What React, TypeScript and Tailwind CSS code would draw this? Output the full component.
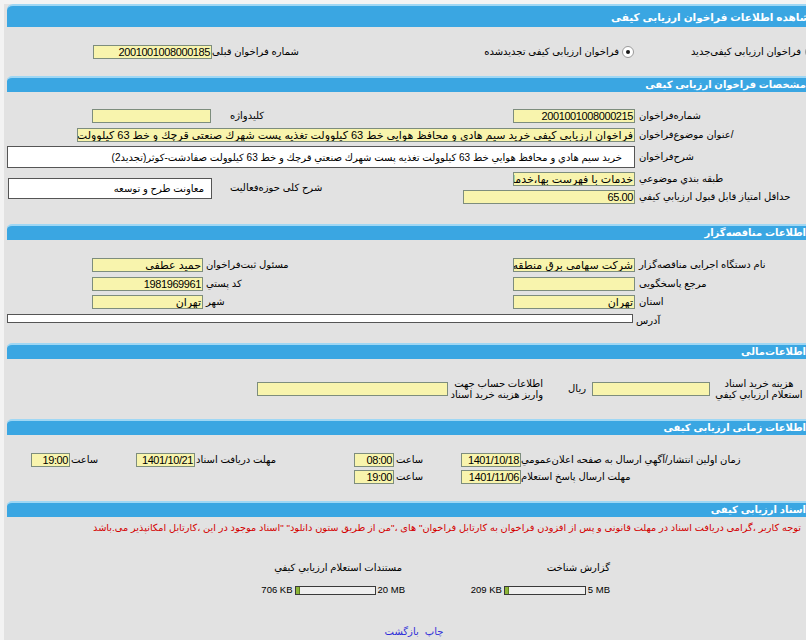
import React from "react";

const FA = "font-['Liberation_Sans','DejaVu_Sans',sans-serif]";

function Header({ children, first }: { children: React.ReactNode; first?: boolean }) {
  return first ? (
    <div className="mx-[3px] mt-[4px] h-[23px] rounded-tl-[6px] rounded-tr-[6px] border-t-[2px] border-[#9fd7f4] bg-[#3aa6e2] pr-[4px] pt-[4px] text-[10.5px] font-bold leading-[15px] text-white whitespace-nowrap">
      {children}
    </div>
  ) : (
    <div className="mx-[3px] h-[16px] rounded-tl-[5px] rounded-tr-[5px] border-t-[2px] border-[#9fd7f4] bg-[#3aa6e2] pr-[15px] text-[10px] font-bold leading-[13px] text-white whitespace-nowrap">
      {children}
    </div>
  );
}

function Inp({ className = "", v = "", num }: { className?: string; v?: string; num?: boolean }) {
  return (
    <div
      className={`h-[14px] shrink-0 overflow-hidden whitespace-nowrap border border-[#7d8d7d] bg-[#f8f4ad] pr-[1px] text-right text-[11px] leading-[12px] text-black ${
        num ? "tracking-[-0.4px]" : ""
      } ${className}`}
    >
      {v}
    </div>
  );
}

function Lbl({ className = "", children }: { className?: string; children?: React.ReactNode }) {
  return (
    <div className={`flex shrink-0 justify-end whitespace-nowrap text-[10px] leading-[14px] text-black ${className}`}>
      <span className="shrink-0">{children}</span>
    </div>
  );
}

function Radio({ checked }: { checked?: boolean }) {
  return (
    <span className="flex h-[12px] w-[12px] shrink-0 items-center justify-center rounded-full border border-[#9a9a9a] bg-white">
      {checked ? <span className="h-[4px] w-[4px] rounded-full bg-[#1a1a1a]" /> : null}
    </span>
  );
}

function Bar({ className = "" }: { className?: string }) {
  return (
    <div className={`flex h-[9px] border border-[#3a3a3a] bg-[#efefef] ${className}`}>
      <div className="w-[4px] border-r border-[#5c7d1e] bg-[#8db538]" />
    </div>
  );
}

export default function App() {
  return (
    <div className={`h-[640px] w-[806px] overflow-hidden bg-[#f3f3f3] ${FA}`}>
      <div dir="rtl" className="ml-[4px] h-[638px] w-[820px] bg-[#e2e2e2]">
        {/* Section 1 */}
        <Header first>مشاهده اطلاعات فراخوان ارزیابی کیفی</Header>
        <div className="mt-[18px] flex h-[14px] items-center">
          <div className="flex w-[188px] shrink-0 items-center gap-[4px] pr-[7px]">
            <Radio />
            <span className="whitespace-nowrap text-[10px] leading-[14px]">فراخوان ارزیابی کیفی‌جدید</span>
          </div>
          <div className="flex w-[336px] shrink-0 items-center gap-[3px] pr-[2px]">
            <Radio checked />
            <span className="whitespace-nowrap text-[10px] leading-[14px]">فراخوان ارزیابی کیفی تجدیدشده</span>
          </div>
          <Lbl className="w-[88px]">شماره فراخوان قبلی</Lbl>
          <Inp className="w-[119px]" v="2001001008000185" num />
        </div>

        {/* Section 2 */}
        <div className="mt-[17px]">
          <Header>مشخصات فراخوان ارزیابی کیفی</Header>
        </div>
        <div className="mt-[17px] flex h-[14px] items-center">
          <Lbl className="w-[189px] pl-[4px]">شماره‌فراخوان</Lbl>
          <Inp className="w-[122px]" v="2001001008000215" num />
          <Lbl className="w-[285px] pl-[2px]">کلیدواژه</Lbl>
          <Inp className="mr-[17px] w-[119px]" />
        </div>
        <div className="mt-[5px] flex h-[14px] items-center">
          <Lbl className="w-[189px] pl-[4px]">/عنوان موضوع‌فراخوان</Lbl>
          <Inp
            className="w-[558px] text-[10.5px]"
            v="فراخوان ارزیابی کیفی خرید سیم هادي و محافظ هوايي خط 63 کیلوولت تغذيه پست شهرك صنعتي قرچك و خط 63 کیلوولت صفادشت-کوثر(تجدید2)"
          />
        </div>
        <div className="mt-[4px] flex h-[22px] items-center">
          <Lbl className="w-[189px] pl-[4px]">شرح‌فراخوان</Lbl>
          <div className="flex h-[22px] w-[628px] shrink-0 items-center overflow-hidden whitespace-nowrap border border-[#555] bg-white pr-[12px] text-[10px]">
            خرید سیم هادي و محافظ هوايي خط 63 کیلوولت تغذيه پست شهرك صنعتي قرچك و خط 63 کیلوولت صفادشت-کوثر(تجدید2)
          </div>
        </div>
        <div className="mt-[4px] flex items-center">
          <div className="flex w-[361px] shrink-0 flex-col gap-[4px]">
            <div className="flex h-[14px] items-center">
              <Lbl className="w-[189px] pl-[4px]">طبقه بندي موضوعي</Lbl>
              <Inp className="w-[122px]" v="خدمات با فهرست بها،خدمات مشاوره" />
            </div>
            <div className="flex h-[14px] items-center">
              <Lbl className="w-[189px] pl-[4px]">حداقل امتیاز قابل قبول ارزیابي کیفي</Lbl>
              <Inp className="w-[172px]" v="65.00" num />
            </div>
          </div>
          <div className="flex w-[235px] shrink-0 justify-end whitespace-nowrap pl-[2px] text-[10px] leading-[14px]">
            <span>شرح کلی حوزه‌فعالیت</span>
          </div>
          <div className="mr-[16px] flex h-[21px] w-[204px] shrink-0 items-center whitespace-nowrap border border-[#555] bg-white pr-[7px] text-[10px]">
            معاونت طرح و توسعه
          </div>
        </div>

        {/* Section 3 */}
        <div className="mt-[20px]">
          <Header>اطلاعات مناقصه‌گزار</Header>
        </div>
        <div className="mt-[18px] flex h-[14px] items-center">
          <Lbl className="w-[189px] pl-[4px]">نام دستگاه اجرایی مناقصه‌گزار</Lbl>
          <Inp className="w-[122px]" v="شرکت سهامی برق منطقه ای تهران" />
          <Lbl className="w-[308px] pl-[1px]">مسئول ثبت‌فراخوان</Lbl>
          <Inp className="mr-[2px] w-[111px]" v="حمید عطفی" />
        </div>
        <div className="mt-[5px] flex h-[14px] items-center">
          <Lbl className="w-[189px] pl-[4px]">مرجع پاسخگویی</Lbl>
          <Inp className="w-[122px]" />
          <Lbl className="w-[308px] pl-[1px]">کد پستي</Lbl>
          <Inp className="mr-[2px] w-[111px]" v="1981969961" num />
        </div>
        <div className="mt-[4px] flex h-[14px] items-center">
          <Lbl className="w-[189px] pl-[4px]">استان</Lbl>
          <Inp className="w-[122px]" v="تهران" />
          <Lbl className="w-[308px] pl-[1px]">شهر</Lbl>
          <Inp className="mr-[2px] w-[111px]" v="تهران" />
        </div>
        <div className="mt-[5px] flex h-[9px] items-center">
          <Lbl className="mt-[5px] w-[189px] pl-[1px]">آدرس</Lbl>
          <div className="mr-[2px] h-[9px] w-[626px] shrink-0 border border-[#555] bg-white" />
        </div>

        {/* Section 4 */}
        <div className="mt-[20px]">
          <Header>اطلاعات‌مالی</Header>
        </div>
        <div className="mt-[19px] flex h-[22px] items-center">
          <div className="w-[112px] shrink-0 whitespace-nowrap pr-[18px] text-center text-[10px] leading-[11px]">
            هزینه خرید اسناد
            <br />
            استعلام ارزیابي کیفي
          </div>
          <Inp className="mr-[2px] w-[118px]" />
          <div className="w-[44px] shrink-0 pr-[6px] text-right text-[10px] leading-[14px]">ریال</div>
          <div className="shrink-0 whitespace-nowrap pr-[5px] text-right text-[10px] leading-[11px]">
            اطلاعات حساب جهت
            <br />
            واریز هزینه خرید اسناد
          </div>
          <Inp className="mr-[3px] w-[191px]" />
        </div>

        {/* Section 5 */}
        <div className="mt-[19px]">
          <Header>اطلاعات زمانی ارزیابی کیفی</Header>
        </div>
        <div className="mt-[18px] flex h-[14px] items-center">
          <Lbl className="w-[303px]">زمان اولین انتشار/آگهي ارسال به صفحه اعلان‌عمومي</Lbl>
          <Inp className="w-[60px]" v="1401/10/18" num />
          <Lbl className="w-[65px]">ساعت</Lbl>
          <Inp className="mr-[2px] w-[40px]" v="08:00" num />
          <Lbl className="w-[158px]">مهلت دریافت اسناد</Lbl>
          <Inp className="mr-[1px] w-[59px]" v="1401/10/21" num />
          <Lbl className="w-[65px]">ساعت</Lbl>
          <Inp className="mr-[1px] w-[39px]" v="19:00" num />
        </div>
        <div className="mt-[3px] flex h-[14px] items-center">
          <Lbl className="w-[303px]">مهلت ارسال پاسخ استعلام</Lbl>
          <Inp className="w-[60px]" v="1401/11/06" num />
          <Lbl className="w-[65px]">ساعت</Lbl>
          <Inp className="mr-[2px] w-[40px]" v="19:00" num />
        </div>

        {/* Section 6 */}
        <div className="mt-[17px]">
          <Header>اسناد ارزیابی کیفی</Header>
        </div>
        <div className="mt-[4px] h-[14px] whitespace-nowrap pr-[23px] text-[9.8px] leading-[14px] text-[#d40000]">
          توجه کاربر ،گرامی دریافت اسناد در مهلت قانونی و پس از افزودن فراخوان به کارتابل فراخوان" های ،"من از طریق ستون دانلود" "اسناد موجود در این ،کارتابل امکانپذیر می.باشد
        </div>
        <div className="mt-[26px] flex h-[14px] items-center">
          <div className="w-[212px] shrink-0" />
          <div className="w-[207px] shrink-0 whitespace-nowrap pr-[2px] text-right text-[10px] leading-[14px]">گزارش شناخت</div>
          <div className="w-[207px] shrink-0 whitespace-nowrap pr-[3px] text-right text-[10px] leading-[14px]">مستندات استعلام ارزیابي کیفي</div>
        </div>
        <div className="mt-[9px] flex h-[12px] items-center">
          <div className="w-[212px] shrink-0" />
          <div dir="ltr" className="flex w-[207px] shrink-0 items-center justify-end gap-[2px] pr-[2px] text-[9.5px] leading-[12px]">
            <span>209 KB</span>
            <Bar className="w-[82px]" />
            <span>5 MB</span>
          </div>
          <div dir="ltr" className="flex w-[207px] shrink-0 items-center justify-end gap-[2px] text-[9.5px] leading-[12px]">
            <span>706 KB</span>
            <Bar className="w-[81px]" />
            <span>20 MB</span>
          </div>
        </div>
        <div className="mt-[29px] flex h-[13px] justify-center gap-[6px] text-[10px] leading-[13px] text-[#2f2fd8]">
          <span>چاپ</span>
          <span>بازگشت</span>
        </div>
      </div>
    </div>
  );
}
